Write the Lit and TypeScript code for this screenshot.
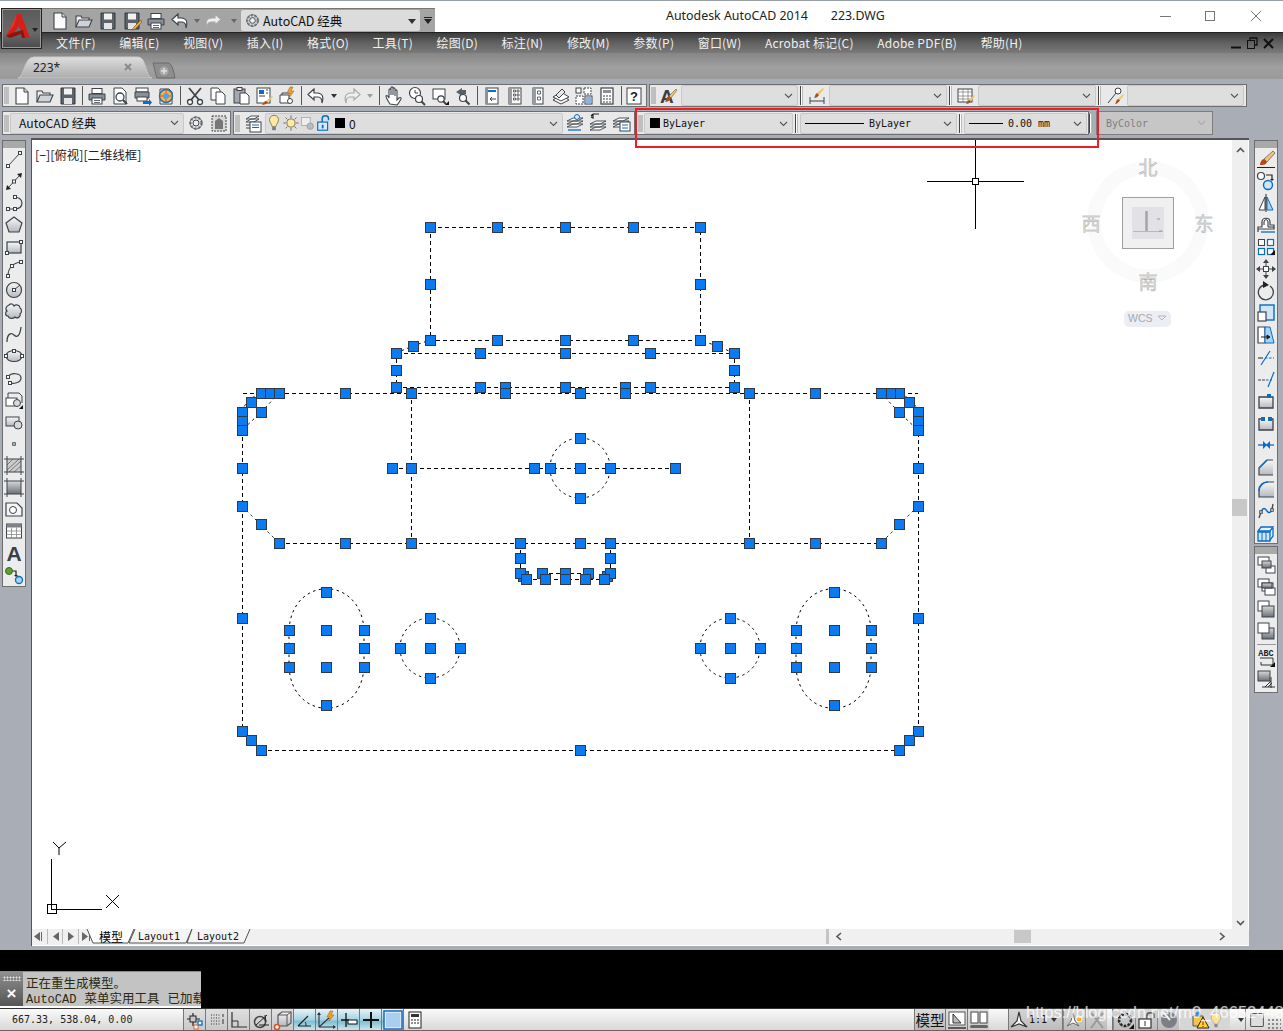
import { LitElement, html, css, svg } from "lit";
import { customElement } from "lit/decorators.js";
import { unsafeSVG } from "lit/directives/unsafe-svg.js";

const D = "#3d434b", B = "#0a6cc4", G = "#8a8f96";
const box = (x: number, y: number, s = 3, c = D) => `<rect x="${x - s / 2}" y="${y - s / 2}" width="${s}" height="${s}" fill="#fff" stroke="${c}"/>`;
const st = (d: string, c = D, w = 1.2) => `<path d="${d}" fill="none" stroke="${c}" stroke-width="${w}"/>`;
const grad = `<linearGradient id="gg" x1="0" y1="0" x2="0" y2="1"><stop offset="0" stop-color="#f8f8f8"/><stop offset="1" stop-color="#b4b8be"/></linearGradient><linearGradient id="gd" x1="0" y1="0" x2="0" y2="1"><stop offset="0" stop-color="#d8d8d8"/><stop offset="1" stop-color="#6a6f76"/></linearGradient>`;
const brush = `<path d="M17 3l1 1-6 8-2-2z" fill="#f1c56a" stroke="#7a5a20" stroke-width=".6"/><path d="M10 10l2 2c-1 3-4 4-6 4 1-1 1-5 4-6z" fill="#a8501c"/>`;
const page = `<path d="M4 2h8l4 4v12H4z" fill="#fbfbfb" stroke="${D}" stroke-width="1.1"/><path d="M12 2v4h4" fill="#e0e0e0" stroke="${D}"/>`;
const folder = `<path d="M2 16V5h5l1 2h7v2" fill="#eee" stroke="${D}" stroke-width="1.1"/><path d="M2 16l3-7h13l-3 7z" fill="#cfd3d8" stroke="${D}" stroke-width="1.1"/>`;
const floppy = `<path d="M3 2h14v16H3z" fill="#5d636b" stroke="#33383e"/><rect x="6" y="2.5" width="8" height="6" fill="#f2f2f2"/><rect x="6" y="12" width="8" height="6" fill="#e4e4e4"/>`;
const printer = `<rect x="5" y="2.5" width="10" height="5" fill="#fff" stroke="${D}"/><path d="M2 8h16v6H2z" fill="#8b9097" stroke="${D}"/><rect x="5" y="12" width="10" height="6" fill="#fff" stroke="${D}"/><path d="M7 14.5h6M7 16.5h6" stroke="${D}" stroke-width=".8"/>`;
const undo = (c = D, f = "#fff") => `<path d="M8 3L2 8.5 8 14v-3h4c3 0 4 2 4 6 2-5 1-10-5-10H8z" fill="${f}" stroke="${c}" stroke-width="1.2"/>`;
const redo = (c = "#a8a8a8", f = "#eee") => `<path d="M12 3l6 5.5L12 14v-3H8c-3 0-4 2-4 6-2-5-1-10 5-10h3z" fill="${f}" stroke="${c}" stroke-width="1.2"/>`;
const stack = (y = 0) => `<path d="M2 ${14 + y}l6-3h10l-6 3z M2 ${11 + y}l6-3h10l-6 3z M2 ${8 + y}l6-3h10l-6 3z" fill="#fff" stroke="${D}" stroke-width=".9"/>`;
const bulb = `<path d="M10 1.5c-3.5 0-5 2.5-5 5 0 3 2.5 4.5 3 7.5h4c.5-3 3-4.5 3-7.5 0-2.5-1.500-5-5-5z" fill="#ffe9a0" stroke="#7a7a50"/><rect x="8" y="14.500" width="4" height="3.500" fill="#6b7c8a"/>`;

const I: Record<string, string> = {
  new: page,
  open: folder,
  save: floppy,
  saveas: floppy + `<path d="M19 9l-7 7-2 3 3-1 7-7z" fill="#f0b040" stroke="#8a5a10" stroke-width=".7"/>`,
  print: printer,
  undo: undo(),
  redo: redo(),
  preview: `<path d="M4 2h8l4 4v12H4z" fill="#fff" stroke="${D}"/>` + `<circle cx="10" cy="11" r="4" fill="#fff" stroke="${D}" stroke-width="1.3"/><path d="M13 14l4 4" stroke="${D}" stroke-width="2"/>`,
  plot: `<rect x="3" y="2" width="12" height="4" fill="#fff" stroke="${D}"/><path d="M2 6h14v6H2z" fill="#8b9097" stroke="${D}"/><rect x="4" y="11" width="10" height="4" fill="#fff" stroke="${D}"/><path d="M10 15h6v-2l3 3.500-3 3.500v-2h-6z" fill="#1668c0"/>`,
  dwf: `<path d="M4 3h9l3 3v12H4z" fill="#fff" stroke="${D}"/><circle cx="10" cy="10" r="6.500" fill="#f7b53c" stroke="#2a6fb0" stroke-width="1.500"/><path d="M10 4v12M4 10h12" stroke="#e05030"/><circle cx="10" cy="10" r="3" fill="#5aa0de"/>`,
  cut: `<path d="M4 2l10 12M16 2L6 14" stroke="${D}" stroke-width="1.800"/><circle cx="5" cy="16" r="2.500" fill="#fff" stroke="${D}" stroke-width="1.300"/><circle cx="15" cy="16" r="2.500" fill="#fff" stroke="${D}" stroke-width="1.300"/>`,
  copyc: `<path d="M3 2h7l2 2v10H3z" fill="#fff" stroke="${D}"/><path d="M8 6h6l3 3v9H8z" fill="#fff" stroke="${D}"/>`,
  paste: `<rect x="3" y="3" width="11" height="14" fill="#a5a9af" stroke="${D}"/><rect x="6" y="1.500" width="5" height="3" fill="#eee" stroke="${D}"/><path d="M9 7h6l3 3v8H9z" fill="#fff" stroke="${D}"/>`,
  match: `<rect x="3" y="2" width="13" height="15" fill="#fff" stroke="${D}"/><rect x="5" y="4" width="5" height="4" fill="#1668c0"/><path d="M12 4h2M12 7h2M5 10h6" stroke="${D}"/>` + `<path d="M18 10l1 1-5 5-2-1z" fill="#f1c56a"/><path d="M12 15l2 1c-1 2-4 3-6 3 1-1 2-4 4-4z" fill="#a8501c"/>`,
  block: `<path d="M3 9h9v8H3z" fill="#fff" stroke="${D}"/><path d="M5 9V7h9" fill="none" stroke="${D}"/><circle cx="13" cy="15" r="2.500" fill="#fff" stroke="${D}"/><path d="M13 1l-3 6h3l-1 5 5-7h-3l2-4z" fill="#f0a030" stroke="#a05a10" stroke-width=".5"/>`,
  pan: `<path d="M6 18c-2-3-4-6-4-8 1-1 2 0 3 2V4c0-1.500 2-1.500 2 0v5-7c0-1.500 2-1.500 2 0v7-6c0-1.500 2-1.500 2 0v7-5c0-1.500 2-1.500 2 0v9l2-2c1.500-1 2.500 0 2 1l-3 5-1 1z" fill="#fff" stroke="${D}" stroke-width="1.100"/>`,
  zoomr: `<circle cx="8" cy="7" r="5.500" fill="#fff" stroke="${D}" stroke-width="1.200"/><path d="M8 4v3h3" fill="none" stroke="${D}"/><circle cx="12" cy="13" r="3.500" fill="#fff" stroke="${D}" stroke-width="1.200"/><path d="M14.500 15.500l3.500 3.500" stroke="${D}" stroke-width="2"/>`,
  zoomw: `<rect x="3" y="3" width="12" height="10" fill="#fff" stroke="${D}"/><circle cx="11" cy="13" r="3.200" fill="#fff" stroke="${D}" stroke-width="1.200"/><path d="M13 15l3 3" stroke="${D}" stroke-width="2"/><path d="M15 19h4v-4z" fill="#111"/>`,
  zoomp: `<path d="M9 2L3 6l6 4V8h4V4H9z" fill="#5a6068"/><circle cx="10" cy="12" r="3.500" fill="#fff" stroke="${D}" stroke-width="1.200"/><path d="M12.500 14.500l4 4" stroke="${D}" stroke-width="2"/>`,
  prop: `<rect x="4" y="2" width="12" height="16" fill="#fff" stroke="${D}"/><rect x="6" y="4" width="8" height="2" fill="#1668c0"/><rect x="4" y="2" width="2" height="16" fill="#8b9097"/><path d="M8 13h6M8 13l2-2M8 13l2 2" fill="none" stroke="${D}"/>`,
  design: `<rect x="4" y="2" width="12" height="16" fill="#fff" stroke="${D}"/><rect x="4" y="2" width="3" height="16" fill="#9a9ea4"/><path d="M8.500 4h2v2h-2zM12 4h2v2h-2zM8.500 8h2v2h-2zM12 8h2v2h-2zM8.500 12h2v2h-2zM12 12h2v2h-2z" fill="#fff" stroke="${D}" stroke-width=".8"/>`,
  palette: `<rect x="5" y="2" width="10" height="16" fill="#fff" stroke="${D}"/><rect x="5" y="2" width="3" height="16" fill="#9a9ea4"/><path d="M9.500 5h3v3h-3zM9.500 11h3v3h-3z" fill="#fff" stroke="${D}" stroke-width=".8"/>`,
  sheet: `<path d="M2 14l8-5 8 5-8 4z" fill="#fff" stroke="${D}"/><path d="M2 11l8-5 8 5-8 4z" fill="#fff" stroke="${D}"/><path d="M5 9l6-6 3 3-6 6z" fill="#e8e8e8" stroke="${D}"/>`,
  markup: `<rect x="2" y="2" width="5" height="5" fill="#fff" stroke="${D}"/><path d="M10 2h7v6h-7zM2 10h7v8H2z" fill="#fff" stroke="${D}" stroke-dasharray="2 1"/><rect x="11" y="10" width="7" height="8" fill="#fff" stroke="${D}"/><path d="M12 12h5M12 14h5M12 16h5" stroke="#1668c0"/>`,
  calc: `<rect x="4" y="2" width="12" height="16" fill="#fff" stroke="${D}" stroke-width="1.200"/><rect x="6" y="4" width="8" height="3" fill="#8b9097"/><path d="M6 10h2M9 10h2M12 10h2M6 13h2M9 13h2M12 13h2M6 16h2M9 16h2M12 16h2" stroke="${D}"/>`,
  help: `<rect x="3" y="2" width="14" height="16" fill="#fff" stroke="${D}"/><text x="10" y="15" text-anchor="middle" font-size="13" font-weight="700" font-family="Liberation Sans" fill="#222">?</text>`,
  textst: `<text x="1" y="17" font-size="19" font-weight="700" font-family="Liberation Sans" fill="#3a4048">A</text>` + brush,
  dimst: `<path d="M3 11v7M17 11v7M3 15h14" stroke="${D}" fill="none"/>` + `<path d="M16 2l1 1-5 6-2-2z" fill="#f1c56a"/><path d="M10 7l2 2c-1 2-3 3-5 3 1-1 1-4 3-5z" fill="#a8501c"/>`,
  tablest: `<rect x="2" y="3" width="14" height="13" fill="#fff" stroke="${D}"/><path d="M2 6h14M2 10h14M2 13h14M7 3v13M12 3v13" stroke="#777" stroke-width=".7"/>` + `<path d="M18 9l1 1-4 5-2-1z" fill="#f1c56a"/><path d="M13 14l2 1c-1 2-3 3-5 3 1-1 1-3 3-4z" fill="#a8501c"/>`,
  mleader: `<circle cx="13" cy="5" r="3" fill="#fff" stroke="${D}"/><path d="M11 7l-8 10" stroke="${D}"/><path d="M18 8l1 1-4 5-2-1z" fill="#f1c56a"/><path d="M13 13l2 1c-1 2-3 4-5 4 1-1 1-4 3-5z" fill="#a8501c"/>`,
  gear: `<circle cx="10" cy="10" r="5.500" fill="none" stroke="${G}" stroke-width="2.500" stroke-dasharray="2.400 1.500"/><circle cx="10" cy="10" r="6" fill="none" stroke="${D}" stroke-width=".7"/><circle cx="10" cy="10" r="3" fill="#eee" stroke="${D}"/>`,
  wsave: `<rect x="3" y="3" width="14" height="15" fill="#d8d8d8" stroke="${D}" stroke-dasharray="2 1"/><path d="M6 8l4-3 4 3v8H6z" fill="#777"/>`,
  layerm: `<path d="M3 9l5-3h8l-5 3zM3 6l5-3h8l-5 3z" fill="#fff" stroke="${D}" stroke-width=".9"/><rect x="7" y="9" width="11" height="10" fill="#fff" stroke="${D}"/><path d="M9 12h7M9 14.500h7" stroke="${B}"/><path d="M3 12l4 0M3 15l4 0" stroke="${D}"/>`,
  lamp: bulb,
  sun: `<circle cx="10" cy="10" r="4.500" fill="#ffe9a0" stroke="#7a7050"/><path d="M10 1.500v3M10 15.500v3M1.500 10h3M15.500 10h3M4 4l2 2M14 14l2 2M4 16l2-2M14 6l2-2" stroke="#6a6a50"/>`,
  vplock: `<rect x="3" y="3" width="11" height="10" fill="#eee" stroke="#a5a5a5"/><circle cx="14" cy="14" r="4" fill="#b8bcc0" stroke="#999"/>`,
  lock: `<rect x="3" y="9" width="11" height="9" fill="#d5edf8" stroke="#0a6cc4" stroke-width="1.300"/><path d="M8 9V5c0-4 7-4 7 0v2" fill="none" stroke="#0a6cc4" stroke-width="1.600"/><rect x="7.500" y="12" width="2" height="4" fill="#0a6cc4"/>`,
  layeru: stack() + `<circle cx="12" cy="4" r="2.500" fill="#dce8f4" stroke="${B}"/><path d="M3 17h13" stroke="${B}" stroke-width="1.300"/>`,
  layerp: stack(3) + `<path d="M5 1v4l-2-1m2 -3l-2 2 M5 1h6" fill="none" stroke="#222" stroke-width="1.200"/>`,
  layers: stack() + `<rect x="9" y="9" width="10" height="9" fill="#fff" stroke="${D}"/><path d="M11 12h6M11 15h6" stroke="${B}"/>`,
  line: `<path d="M4 17L16 4" stroke="${D}"/>` + box(4, 17) + box(16, 4),
  xline: `<path d="M3 18L17 3" stroke="${D}"/><path d="M2 19l1-5 4 4zM18 2l-1 5-4-4z" fill="#222"/>` + box(10, 10.5),
  pline: st("M4 16h6c5 0 8-2 8-6s-4-6-8-6") + box(4, 16) + box(11, 16) + box(11, 4),
  polygon: `<path d="M10 2l8 6-3 9H5L2 8z" fill="url(#gg)" stroke="${D}" stroke-width="1.200"/>`,
  rect: `<rect x="3" y="5" width="14" height="11" fill="url(#gg)" stroke="${D}" stroke-width="1.200"/>` + box(3, 16) + box(17, 5),
  arc: st("M4 18C4 10 9 5 17 4") + box(4, 18) + box(8, 8) + box(17, 4),
  circle: `<circle cx="10" cy="10" r="7.500" fill="url(#gg)" stroke="${D}" stroke-width="1.200"/><path d="M10 10l6-5" stroke="${D}"/>` + box(10, 10),
  cloud: `<path d="M5 3c2-2 4-1 5 1 2-2 6-1 6 2 2 1 2 5 0 6 1 3-3 5-5 3-2 2-6 2-7-1-3 0-3-4-1-5-2-2-1-5 2-6z" fill="url(#gg)" stroke="${D}" stroke-width="1.200"/>`,
  spline: st("M3 18C3 10 7 8 10 11s6 1 7-8", D, 1.300),
  ellipse: `<ellipse cx="10" cy="10" rx="8" ry="5.500" fill="url(#gg)" stroke="${D}" stroke-width="1.200"/>` + box(2, 10) + box(18, 10) + box(10, 5),
  earc: st("M4 9c3-5 13-4 13 1s-8 6-11 5") + box(4, 9) + box(6, 15),
  insert: `<path d="M4 8V3h11l3 3v7" fill="none" stroke="${D}"/><rect x="2" y="8" width="11" height="8" fill="#fff" stroke="${D}"/><circle cx="13" cy="13" r="3.500" fill="#d8d8d8" stroke="${D}"/><path d="M15 19h4v-4z" fill="#111"/>`,
  blockm: `<rect x="2" y="5" width="13" height="9" fill="url(#gg)" stroke="${D}"/><circle cx="14" cy="13" r="4" fill="#d8d8d8" stroke="${D}"/>`,
  point: box(10, 10, 2.500),
  hatch: `<rect x="3" y="4" width="14" height="13" fill="#ccc"/><path d="M3 15L15 4M5 17L17 6M3 10l6-6M10 17l7-6" stroke="#777" stroke-width="1"/><path d="M0 4h20M0 17h20M3 1v19M17 1v19" stroke="${D}"/>`,
  gradient: `<rect x="3" y="4" width="14" height="13" fill="url(#gd)"/><path d="M0 4h20M0 17h20M3 1v19M17 1v19" stroke="${D}"/>`,
  region: `<path d="M2 4h11l5 5v8H2z" fill="#f5f5f5" stroke="${D}" stroke-width="1.200"/><circle cx="9" cy="11" r="3.500" fill="#fff" stroke="${D}"/>`,
  table: `<rect x="2.500" y="3" width="15" height="14" fill="#fff" stroke="${D}"/><rect x="2.500" y="3" width="15" height="3.500" fill="#7d8389"/><path d="M2.500 10h15M2.500 13.500h15M7.500 6.500V17M12.500 6.500V17" stroke="#888" stroke-width=".8"/>`,
  mtext: `<text x="10" y="17.500" text-anchor="middle" font-size="21" font-weight="700" font-family="Liberation Sans" fill="#3a4048">A</text>`,
  addsel: `<circle cx="5" cy="6" r="3.500" fill="#5fa030" stroke="#3a6a20"/><circle cx="15" cy="15" r="3.500" fill="#a8d4f4" stroke="#0a6cc4" stroke-width="1.300"/><path d="M9 6h3v4" fill="none" stroke="#222" stroke-width="1.200"/><path d="M10 10h4l-2 2z" fill="#222"/>`,
  erase: `<path d="M17 2l2 2-8 9-3-3z" fill="#f2c27a" stroke="#555" stroke-width=".7"/><path d="M8 10l3 3c-1 3-4 3-7 3 0-3 2-6 4-6z" fill="#b8481c"/><path d="M1 18.500h18" stroke="#222"/>`,
  copy: `<circle cx="5" cy="5" r="3.500" fill="#fff" stroke="${D}" stroke-width="1.200"/><circle cx="12" cy="14" r="4.500" fill="#cfe6f8" stroke="${B}" stroke-width="1.400"/><path d="M10 4h6v4" fill="none" stroke="#222" stroke-width="1.200"/><path d="M14 8h4l-2 2z" fill="#222"/>`,
  mirror: `<path d="M9 4L3 17h6z" fill="#fff" stroke="${D}"/><path d="M11 4l6 13h-6z" fill="#a8d4f4" stroke="${B}"/><path d="M10 1v18" stroke="#222"/>`,
  offset: `<path d="M2 17V12h4V7c0-5 8-5 8 0v3h4v4H2" fill="#fff" stroke="${D}" stroke-width="1.200"/><path d="M5 17h14" stroke="${B}" stroke-width="1.300"/><path d="M8 10V7c0-3 4-3 4 0v5h6" fill="none" stroke="#222"/>`,
  array: `<rect x="2.500" y="2.500" width="6" height="6" fill="#fff" stroke="${D}"/><rect x="11.500" y="2.500" width="6" height="6" fill="#fff" stroke="${B}" stroke-width="1.200"/><rect x="2.500" y="11.500" width="6" height="6" fill="#fff" stroke="${B}" stroke-width="1.200"/><rect x="11.500" y="11.500" width="6" height="6" fill="#fff" stroke="${B}" stroke-width="1.200"/><path d="M14 18h5v-5z" fill="#111"/>`,
  move: `<path d="M10 2v16M2 10h16" stroke="${D}"/><path d="M10 0l3 4H7zM10 20l3-4H7zM0 10l4-3v6zM20 10l-4-3v6z" fill="${D}"/><rect x="7.500" y="7.500" width="5" height="5" fill="#fff" stroke="${D}"/>`,
  rotate: `<path d="M8 4a7.500 7.500 0 1 0 6 1" fill="none" stroke="${D}" stroke-width="1.300"/><path d="M7 0l6 4-6 3z" fill="#222"/>`,
  scale: `<rect x="4" y="2" width="14" height="15" fill="#cfe6f8" stroke="${B}" stroke-width="1.400"/><rect x="2" y="9" width="8" height="9" fill="#fff" stroke="${D}" stroke-width="1.200"/>`,
  stretch: `<path d="M2 2h7v16H2z" fill="#fff" stroke="${D}" stroke-width="1.200"/><path d="M9 2h5l4 16H9z" fill="#a8d4f4" stroke="${B}"/><path d="M5 12h6M14 12h-3m3 0l-3-2v4z" stroke="#222" fill="#222"/>`,
  trim: `<path d="M2 11h5" stroke="${D}" stroke-width="1.200"/><path d="M9 11h9" stroke="${B}" stroke-width="1.200" stroke-dasharray="2.500 1.500"/><path d="M14 4L5 18" stroke="${B}" stroke-width="1.200"/>`,
  extend: `<path d="M2 11h8" stroke="${D}" stroke-width="1.200" stroke-dasharray="3 1"/><path d="M10 11h6" stroke="${B}" stroke-width="1.200" stroke-dasharray="2.500 1.500"/><path d="M18 3L12 18" stroke="${B}" stroke-width="1.200"/>`,
  breakp: `<path d="M3 6h14v11H3z" fill="url(#gg)" stroke="${D}" stroke-width="1.300"/><rect x="11" y="3" width="4" height="4" fill="${B}"/>`,
  breakx: `<path d="M6 6H3v11h14V6h-3" fill="url(#gg)" stroke="${D}" stroke-width="1.300"/><path d="M6 6h8" stroke="#fff" stroke-width="1.500"/><rect x="5" y="4" width="4" height="4" fill="${B}"/><rect x="12" y="4" width="4" height="4" fill="${B}"/>`,
  join: `<path d="M2 10h16" stroke="${B}" stroke-width="1.300"/><path d="M7 6l4 4-4 4zM14 6l-4 4 4 4z" fill="${B}"/>`,
  chamfer: `<path d="M3 18V11l8-8h6v15z" fill="url(#gg)"/><path d="M17 3h-6l-8 8v7h14" fill="none" stroke="${D}" stroke-width="1.200"/><path d="M11 3l-8 8" stroke="${B}" stroke-width="1.500"/>`,
  fillet: `<path d="M3 18V11c0-5 4-8 9-8h6v15z" fill="url(#gg)"/><path d="M18 18H3v-7c0-5 4-8 9-8h6" fill="none" stroke="${D}" stroke-width="1.200"/><path d="M3 12c0-5 4-9 9-9" fill="none" stroke="${B}" stroke-width="1.500"/>`,
  blend: st("M3 17l2-6", D, 1.300) + st("M5 11c2-5 4-4 6-1s4 1 5-1", B, 1.400) + st("M16 8l1-5", D, 1.300) + box(5, 11, 2.500) + box(16, 9, 2.500),
  explode: `<path d="M2 9h12v9H2z" fill="#cfe6f8" stroke="${B}" stroke-width="1.300"/><path d="M5 4h12l-3 4H2zM17 5v8l-3 4" fill="#e8f2fa" stroke="${B}" stroke-width="1.300"/><path d="M6 9v9M10 9v9" stroke="${B}"/>`,
  front: `<rect x="2" y="2" width="11" height="8" fill="#fff" stroke="${D}"/><rect x="10" y="11" width="9" height="7" fill="#fff" stroke="${D}"/><rect x="6" y="6" width="9" height="7" fill="url(#gd)" stroke="${D}"/>`,
  back: `<rect x="2" y="2" width="11" height="8" fill="#fff" stroke="${D}"/><rect x="6" y="6" width="11" height="8" fill="#fff" stroke="${D}"/><rect x="9" y="11" width="10" height="7" fill="#fff" stroke="${D}"/><rect x="6" y="6" width="10" height="5" fill="url(#gd)" stroke="${D}"/>`,
  above: `<rect x="2" y="2" width="11" height="10" fill="#fff" stroke="${D}"/><rect x="6" y="7" width="12" height="11" fill="url(#gd)" stroke="${D}"/>`,
  below: `<rect x="6" y="7" width="12" height="11" fill="url(#gd)" stroke="${D}"/><rect x="2" y="2" width="11" height="10" fill="#fff" stroke="${D}"/>`,
  abc: `<text x="10" y="9" text-anchor="middle" font-size="8.500" font-weight="700" font-family="Liberation Mono" fill="#222">ABC</text><path d="M4 11h13v7H5v-3" fill="none" stroke="#333"/><path d="M14 20h5v-5z" fill="#111"/>`,
  hatche: `<rect x="2" y="2" width="12" height="10" fill="url(#gd)" stroke="${D}"/><path d="M6 18h13M15 8v11M9 18l6-6M12 18l4-4" stroke="#333"/>`,
  snap: `<path d="M8 3v13M2 9h13" stroke="#222" stroke-width="1.200"/><rect x="5" y="6" width="6" height="6" fill="#c8c8c8" stroke="#222"/><rect x="13" y="11" width="4" height="4" fill="#fff" stroke="${B}" stroke-width="1.300"/><rect x="9" y="15" width="4" height="4" fill="#fff" stroke="#e06030"/>`,
  grid: `<path d="M4 5h10M4 8h10M4 11h10M4 14h10" stroke="#333" stroke-dasharray="1 1.500"/><path d="M16 4v3M16 9v5" stroke="#333"/>`,
  ortho: `<path d="M3 2v15h15" fill="none" stroke="#333" stroke-width="1.200"/><path d="M3 11h6v6" fill="none" stroke="#333"/>`,
  polar: `<circle cx="9" cy="12" r="5.500" fill="none" stroke="#444" stroke-width="1.500"/><path d="M5 15L16 5M8 15h10M14 5l1 7" fill="none" stroke="#222"/>`,
  osnap3: `<path d="M5 5l4-3h9v11l-4 3H5z" fill="url(#gg)" stroke="#555" stroke-width="1.200"/><path d="M5 5h9v11M14 5l4-3" fill="none" stroke="#555"/><circle cx="4" cy="17" r="2.500" fill="#fff" stroke="#e05020" stroke-width="1.600"/>`,
  otrack: `<path d="M3 16L13 6M3 16h13" fill="none" stroke="#222" stroke-width="1.200"/><path d="M10 12c1 1 1 2 1 4" fill="none" stroke="#222"/>`,
  ducs: `<path d="M2 17V3M2 17h16M2 17l10-9" fill="none" stroke="#333" stroke-width="1.100"/><path d="M0 5l2-3 2 3zM16 15l3 2-3 2z" fill="#333"/><path d="M13 1l-3 6h3l-1 4 5-6h-3l2-4z" fill="#f5a020" stroke="#a05a10" stroke-width=".5"/>`,
  dyn: `<path d="M7 3v14M2 10h8" stroke="#111" stroke-width="1.300"/><rect x="9" y="10" width="9" height="4" fill="#fff" stroke="#111"/>`,
  plus: `<path d="M10 2v16M2 10h16" stroke="#111" stroke-width="2"/>`,
  tpy: `<rect x="1" y="1" width="18" height="18" fill="#fff" stroke="#1a66b8" stroke-width="1.500"/><rect x="2.500" y="2.500" width="15" height="15" fill="#a8cfee"/>`,
  sc: `<rect x="4" y="2" width="12" height="16" fill="#fff" stroke="#222"/><rect x="6" y="4" width="8" height="3" fill="#333"/><path d="M6 10h2M9 10h2M12 10h2M6 13h2M9 13h2M12 13h2" stroke="#222"/>`,
  stmodel: `<rect x="2" y="2" width="16" height="13" fill="#fff" stroke="#555"/><path d="M6 4v9h8z" fill="#bbb" stroke="#333"/><path d="M1 18h18" stroke="#333" stroke-width="1.500"/>`,
  stlayout: `<rect x="2" y="2" width="7" height="11" fill="#fff" stroke="#444"/><rect x="11" y="2" width="7" height="11" fill="#fff" stroke="#444"/><rect x="1" y="15" width="18" height="3" rx="1.500" fill="#666"/>`,
  anno: `<path d="M10 2l2 9 6 6-8-3-8 3 6-6z" fill="#fff" stroke="#333" stroke-width="1.200"/>`,
  anno2: `<path d="M8 3l2 8 4 5-6-3-6 3 4-5z" fill="#fff" stroke="#666"/><circle cx="14" cy="9" r="3" fill="#ffb020" stroke="#fff"/>`,
  anno3: `<path d="M4 3l6 7 6-7M10 10l-6 8M10 10l6 8" fill="none" stroke="#9a9a9a" stroke-width="2"/>`,
  sgear: `<circle cx="10" cy="10" r="6" fill="none" stroke="#222" stroke-width="2.600" stroke-dasharray="2.400 1.600"/><circle cx="10" cy="10" r="6.500" fill="none" stroke="#333" stroke-width=".7"/><path d="M14 19h5v-5z" fill="#111"/>`,
  slock: `<rect x="2" y="9" width="12" height="9" fill="#fff" stroke="#333" stroke-width="1.200"/><path d="M8 11v5" stroke="#333"/><path d="M10 9V5c0-3 7-3 7 0v3" fill="none" stroke="#555" stroke-width="1.500"/>`,
  ball: `<circle cx="10" cy="10" r="8" fill="#7c7f85"/><path d="M4 2l7 8" stroke="#eee" stroke-width="2"/>`,
  warn: `<path d="M3 6h10v10H3z" fill="#f6c344" stroke="#555"/><circle cx="8" cy="4" r="2.500" fill="#3a8ae0"/><path d="M13 7l6 11H7z" fill="#ffd920" stroke="#222"/><path d="M13 11v4M13 16v1" stroke="#c00"/>`,
  sbulb: `<path d="M10 1c-4 0-6 3-6 6 0 3 3 5 4 8h4c1-3 4-5 4-8 0-3-2-6-6-6z" fill="#ffdf90" stroke="#aaa"/><rect x="8" y="15" width="4" height="4" fill="#8a8a8a"/>`,
  swin: `<rect x="2" y="2" width="16" height="16" rx="1" fill="#dedede" stroke="#555" stroke-width="1.300"/>`,
};

const icon = (n: string, sz = 20) => html`<svg class="ic" width=${sz} height=${sz} viewBox="0 0 20 20">${unsafeSVG(I[n] || "")}</svg>`;
const btn = (n: string) => html`<span class="btn">${icon(n)}</span>`;
const arrow = (dim = false) => html`<span class=${dim ? "ar dim" : "ar"}></span>`;
const sep = html`<span class="sep"></span>`;
const vsep = html`<span class="vsep"></span>`;
const chev = html`<svg class="chev" width="9" height="6" viewBox="0 0 9 6"><path d="M1 1l3.500 3.500L8 1" fill="none" stroke="#555" stroke-width="1.100"/></svg>`;
const grip = html`<span class="grip"></span>`;

const LEFT = ["line", "xline", "pline", "polygon", "rect", "arc", "circle", "cloud", "spline", "ellipse", "earc", "insert", "blockm", "point", "hatch", "gradient", "region", "table", "mtext", "addsel"];
const RIGHT = ["erase", "copy", "mirror", "offset", "array", "move", "rotate", "scale", "stretch", "trim", "extend", "breakp", "breakx", "join", "chamfer", "fillet", "blend", "explode"];
const MENU = ["文件(F)", "编辑(E)", "视图(V)", "插入(I)", "格式(O)", "工具(T)", "绘图(D)", "标注(N)", "修改(M)", "参数(P)", "窗口(W)", "Acrobat 标记(C)", "Adobe PDF(B)", "帮助(H)"];

type P = [number, number];
const OUTER: P[] = [
  [261, 393], [270, 393], [279, 393], [345, 393], [411, 393],
  [251, 402], [261, 412], [242, 412], [242, 421], [242, 430], [242, 468], [242, 506], [261, 524], [279, 543], [345, 543], [411, 543],
  [242, 618], [242, 731], [251, 740], [261, 750],
  [326, 592], [289, 630], [326, 630], [364, 630], [289, 648], [364, 648], [289, 667], [326, 667], [364, 667], [326, 705],
  [430, 618], [400, 648], [430, 648], [460, 648], [430, 678],
];
const UPPER: P[] = [
  [396, 353], [396, 370], [396, 387], [413, 346], [480, 353], [480, 387], [430, 340], [497, 340], [430, 284], [430, 227], [497, 227],
];
const CENTER: P[] = [
  [565, 227], [565, 340], [565, 353], [565, 387], [580, 393], [580, 750], [505, 387], [505, 393], [625, 387], [625, 393],
  [392, 468], [411, 468], [534, 468], [550, 468], [580, 468], [610, 468], [675, 468], [580, 438], [580, 498],
  [520, 543], [580, 543], [610, 543], [520, 558], [610, 558],
  [523, 576], [607, 576], [520, 573], [542, 573], [565, 573], [588, 573], [610, 573], [526, 579], [545, 579], [565, 579], [585, 579], [604, 579],
];
const HANDLES: P[] = [
  ...OUTER, ...OUTER.map(([x, y]): P => [1160 - x, y]),
  ...UPPER, ...UPPER.map(([x, y]): P => [1130 - x, y]),
  ...CENTER,
];

const SOLID = "M430.500 227.500H700.500V340.500H430.500Z M396.500 353.500H734.500V387.500H396.500Z M242.500 393.500H917.500 M242.500 430V731 M261 750.500H899 M918.500 731V430 M279 543.500H881 M411.500 393V543 M749.500 393V543 M392 468.500H675 M520.500 543V573 M610.500 543V573 M526 579.500H604 M542 573.500H588";
const ARCS = "M396 353L413 346L430 340 M734 353L717 346L700 340 M242 412Q245 400 261 393 M918 412Q915 400 899 393 M279 393Q262 412 242 430 M881 393Q898 412 918 430 M242 506Q262 526 279 543 M918 506Q898 526 881 543 M520 573L526 579 M610 573L604 579 M550 468A30 30 0 1 1 610 468A30 30 0 1 1 550 468 M400 648A30 30 0 1 1 460 648A30 30 0 1 1 400 648 M700 648A30 30 0 1 1 760 648A30 30 0 1 1 700 648 M289 630C292 575 361 575 364 630V667C361 722 292 722 289 667Z M796 630C799 575 868 575 871 630V667C868 722 799 722 796 667Z";

@customElement("app-root")
export class AppRoot extends LitElement {
  static styles = css`
    :host { display: block; width: 1283px; height: 1031px; overflow: hidden; }
    * { box-sizing: border-box; }
    .app { position: relative; width: 1283px; height: 1031px; background: #a9adb5; display: flex; flex-direction: column; font-family: "Noto Sans CJK SC", "Liberation Sans", sans-serif; font-size: 12px; color: #111; }
    .ic { display: block; flex: none; overflow: visible; }
    .defs { position: absolute; }
    .title { height: 32px; flex: none; background: #fff; border-top: 1px solid #9aa0a8; display: flex; position: relative; }
    .logo { position: absolute; left: 1px; top: 7px; width: 41px; height: 41px; background: linear-gradient(#5a5a5a, #6a6a6a 60%, #4a4a4a); border: 1px solid #222; z-index: 2; box-shadow: inset 0 0 0 1px #999; }
    .qat { margin: 7px 0 0 41px; width: 394px; height: 24px; background: #a4a4a4; display: flex; align-items: center; padding-left: 7px; border-top: 1px solid #777; }
    .qb { width: 24px; display: flex; justify-content: center; }
    .ar { flex: none; width: 0; height: 0; border: 3px solid transparent; border-top: 4px solid #333; border-bottom: 0; margin: 0 3.500px; }
    .ar.dim { border-top-color: #9c9c9c; }
    .qat .ar { border-top-color: #666; margin: 0 1px 0 2px; }
    .qat .ar.a2 { margin: 0 3px 0 6px; }
    .wscombo { width: 179px; height: 21px; background: #dcdcdc; border-radius: 2px; display: flex; align-items: center; margin-left: 1px; padding-left: 2px; gap: 1px; position: relative; font-size: 12.500px; }
    .wscombo .tri { position: absolute; right: 4px; top: 9px; width: 0; height: 0; border: 4px solid transparent; border-top: 5px solid #333; border-bottom: 0; }
    .drop { width: 10px; margin-left: 3px; display: flex; flex-direction: column; align-items: center; gap: 1px; }
    .drop i { display: block; width: 8px; height: 1px; background: #222; }
    .drop b { display: block; width: 0; height: 0; border: 4px solid transparent; border-top: 5px solid #222; border-bottom: 0; }
    .apptitle { position: absolute; left: 666px; top: 6px; font-size: 12.400px; display: flex; gap: 23px; font-family: "Noto Sans", "Liberation Sans", sans-serif; line-height: 18px; color: #222; }
    .win { position: absolute; left: 1160px; top: 9px; display: flex; }
    .menu { height: 21px; flex: none; background: linear-gradient(#3c3c3c, #5e5e5e 45%, #7a7a7a); display: flex; align-items: center; gap: 23.500px; letter-spacing: .22px; padding-left: 56px; color: #f0f0f0; font-size: 12px; border-top: 1px solid #222; position: relative; line-height: 16px; }
    .mdi { position: absolute; left: 1231px; top: 4px; }
    .tabs { height: 26px; flex: none; background: linear-gradient(#868686, #a0a0a0 55%, #9a9a9a); display: flex; padding-left: 18px; align-items: flex-end; }
    .row { display: flex; flex: none; }
    .r1 { height: 23px; margin-top: 5px; padding-left: 2px; }
    .r2 { height: 24px; margin-top: 4px; padding-left: 2px; }
    .tb { height: 100%; background: #e9e9e9; border: 1px solid #6e6e6e; display: flex; align-items: center; }
    .grip { flex: none; width: 5px; height: 17px; margin: 0 1px 0 1px; background-image: radial-gradient(#666 40%, transparent 45%); background-size: 2px 2px; background-color: #bfbfbf; }
    .btn { flex: none; width: 23px; display: flex; justify-content: center; }
    .sep { flex: none; width: 1px; height: 19px; background: #555; margin: 0 2.500px; }
    .hbtn { margin-left: -2px; }
    .vsep { flex: none; width: 3px; height: 19px; border-left: 1px solid #444; border-right: 1px solid #bbb; margin: 0 2px; background: #fff; }
    .combo { flex: none; height: 21px; background: #dedede; border: 1px solid #c8c8c8; border-radius: 2px; display: flex; align-items: center; justify-content: space-between; padding: 0 4px 0 3px; }
    .chev { flex: none; }
    .t1a { width: 645px; margin-right: 2px; }
    .t1b { width: 598px; }
    .t2a { width: 229px; margin-right: 2px; }
    .t2b { width: 402px; margin-right: 1px; }
    .t2c { width: 453px; margin-right: 7px; }
    .c117 { width: 117px; margin-left: 1px; }
    .c118 { width: 118px; margin-left: 1px; }
    .wc { width: 174px; font-size: 12.200px; padding-left: 8px; }
    .lc { width: 298px; margin-left: 1px; justify-content: flex-start; padding-left: 0; position: relative; }
    .li { width: 16.500px; display: flex; justify-content: center; }
    .sq { display: block; width: 10px; height: 10px; background: #000; margin: 0 4px 0 3px; flex: none; }
    .mono { font-family: "DejaVu Sans Mono", monospace; font-size: 10px; }
    .cc1 { width: 149px; justify-content: flex-start; padding-left: 5px; position: relative; }
    .cc1 .sq { margin: 0 3px 0 0; }
    .cc2 { width: 157px; justify-content: flex-start; padding-left: 4px; position: relative; }
    .cc3 { width: 123px; justify-content: flex-start; padding-left: 4px; position: relative; }
    .combo .abs { position: absolute; right: 4px; top: 7px; display: flex; }
    .ln { display: block; height: 1px; background: #000; flex: none; }
    .l60 { width: 59px; margin-right: 5px; }
    .l34 { width: 34px; margin-right: 5px; }
    .bycolor { width: 117px; height: 100%; background: #c6c6c6; border: 1px solid #7c7c7c; display: flex; align-items: center; justify-content: space-between; padding: 0 6px 0 9px; color: #808080; }
    .bycolor .chev path { stroke: #aaa; }
    .main { flex: 1; display: flex; margin-top: 3px; min-height: 0; position: relative; }
    .vt { flex: none; width: 24px; background: #ececec; border: 1px solid #6e6e6e; display: flex; flex-direction: column; align-items: center; }
    .vgrip { align-self: stretch; flex: none; height: 7px; background-color: #a9a9a9; background-image: radial-gradient(#eee 35%, transparent 40%); background-size: 2px 2px; background-position: 3px 0; }
    .vb { flex: none; height: 21.900px; display: flex; align-items: center; }
    .vr { height: 22px; }
    .lt { margin: 2px 0 0 2px; height: 447px; }
    .view { margin-left: 5px; width: 1218px; height: 812px; flex: none; display: flex; flex-direction: column; border-top: 2px solid #555; border-left: 1px solid #555; background: #fff; position: relative; }
    .upper { flex: 1; display: flex; min-height: 0; }
    .canvas { width: 1200px; height: 100%; position: relative; background: #fff; overflow: hidden; }
    .canvas svg.dr { position: absolute; left: 0; top: 0; }
    .vplabel { position: absolute; left: 3px; top: 6px; font-size: 12.400px; line-height: 18px; color: #222; }
    .vs { flex: 1; background: #efefef; position: relative; border-right: 1px solid #fff; }
    .vthumb { position: absolute; left: 0; top: 359px; width: 15px; height: 17px; background: #c8c8c8; }
    .vs svg { position: absolute; left: 4px; }
    .vs .up { top: 7px; }
    .vs .down { bottom: 3px; }
    .hs { height: 17px; flex: none; display: flex; background: #f0f0f0; border-bottom: 1px solid #fff; position: relative; }
    .hs .thumb { position: absolute; left: 982px; top: 1px; width: 17px; height: 13px; background: #c8c8c8; }
    .hs .split { position: absolute; left: 794px; top: 0; width: 3px; height: 15px; background: #c4c4c4; }
    .hs svg.h { position: absolute; top: 3px; }
    .hs .hl { left: 803px; }
    .hs .hrt { left: 1186px; }
    .bottom-gap { height: 4px; flex: none; background: #a9adb5; margin-left: -1px; }
    .rt { margin: 2px 0 0 5px; height: 404px; }
    .rcol { display: flex; flex-direction: column; gap: 1px; flex: none; }
    .rt2 { height: 147px; margin-left: 5px; margin-top: 1px; }
    .hr { width: 19px; height: 1px; background: #999; margin: 2px 0 1px; flex: none; }
    .black { height: 58px; flex: none; background: #000; position: relative; }
    .bubble { position: absolute; left: 0; bottom: 0; width: 201px; height: 37px; background: #c3c3c3; display: flex; overflow: hidden; border-top: 1px solid #8a8a8a; border-bottom: 2px solid #fff; }
    .bx { width: 23px; flex: none; background: linear-gradient(#8f8f8f, #555); display: flex; flex-direction: column; align-items: center; color: #fff; font: 700 17px "Liberation Sans", sans-serif; }
    .bx i { display: block; width: 18px; height: 5px; margin: 4px 0 3px; background-image: radial-gradient(#ddd 45%, transparent 50%); background-size: 3px 3px; }
    .bt { padding: 3px 0 0 3px; line-height: 15px; font-size: 12.500px; white-space: nowrap; color: #2a2a10; }
    .bt .m { font-family: "Liberation Mono", monospace; font-size: 12px; }
    .bt .w { margin-left: 8px; }
    .status { height: 23px; flex: none; background: linear-gradient(#fafafa, #d8d8d8); display: flex; align-items: stretch; position: relative; border-top: 1px solid #333; border-bottom: 1px solid #666; }
    .coord { width: 183px; flex: none; padding: 2px 0 0 12px; font: 10px/18px "DejaVu Sans Mono", monospace; color: #222; }
    .sb { flex: none; width: 22px; display: flex; align-items: center; justify-content: center; border-left: 1px solid #777; background: linear-gradient(#dfdfdf, #c9c9c9); }
    .sb.on { background: linear-gradient(#e6f3f8, #a8d3e2 50%, #80bfd4 60%, #cbe5ee); }
    .sb.w31 { width: 31px; font-size: 14.500px; background: linear-gradient(#dcdcdc, #b8b8b8); color: #111; }
    .sb.lite { background: transparent; }
    .spacer { flex: none; width: 489px; }
    .sp2 { flex: none; width: 19px; }
    .sgroup { flex: none; display: flex; align-items: center; background: linear-gradient(#d4d4d4, #bcbcbc); height: 100%; border-left: 1px solid #777; }
    .s54 { width: 54px; font: 10px "DejaVu Sans Mono", monospace; color: #111; }
    .s54 .ar { margin: 0 0 0 4px; }
    .s54 .txt { margin-left: 0; }
    .sg2 { margin-left: 5px; }
    .si { flex: none; width: 22px; height: 100%; display: flex; align-items: center; justify-content: center; border-left: 1px solid #888; }
    .s48 { flex: none; width: 50px; display: flex; align-items: center; padding-left: 10px; background: #d6d6d6; margin-left: 1px; }
    .s48 .b2 { margin-left: -2px; }
    .status > .ar { align-self: center; margin: 0 1px 0 8px; }
    .sgrip { flex: none; width: 14px; align-self: flex-end; height: 12px; background-image: radial-gradient(#888 40%, transparent 45%); background-size: 4px 4px; }
    .wm { position: absolute; left: 1026px; top: 999px; font: 16.500px/26px "Liberation Sans", sans-serif; color: rgba(255, 255, 255, .62); white-space: nowrap; pointer-events: none; text-shadow: 0 0 1px rgba(255, 255, 255, .4); }
    .red { position: absolute; left: 635px; top: 108px; width: 464px; height: 40px; border: 2px solid #ee1c25; pointer-events: none; }
  `;

  logo() {
    return html`<div class="logo"><svg width="39" height="39" viewBox="0 0 39 39">
      <path d="M15 5H19L28 29H22L17 17L12 24L4 27Z" fill="#d5201a"/>
      <path d="M10 24L21 21L23 29H20L19 25L8 29L4 27Z" fill="#8a1410"/>
      <path d="M15 5L12 16L6 24Z" fill="#ec3a28"/>
      <path d="M30 19H36L33 23Z" fill="#222"/>
    </svg></div>`;
  }

  drawing() {
    return svg`
      <path d=${SOLID} fill="none" stroke="#000" stroke-dasharray="4 3" shape-rendering="crispEdges"/>
      <path d=${ARCS} fill="none" stroke="#000" stroke-dasharray="2.500 3.500" stroke-width="1"/>
      ${HANDLES.map(([x, y]) => svg`<rect x=${x - 4.5} y=${y - 4.5} width="10" height="10" fill="#0a7bf2" stroke="#2f3a44" shape-rendering="crispEdges"/>`)}
      <path d="M975.500 140V229M927 181.500H1024" stroke="#000" shape-rendering="crispEdges"/>
      <rect x="972.500" y="178.500" width="6" height="6" fill="#fff" stroke="#000" shape-rendering="crispEdges"/>
      <path d="M51.500 859V909.500H102" fill="none" stroke="#000" shape-rendering="crispEdges"/>
      <rect x="47.500" y="904.500" width="9" height="9" fill="none" stroke="#000" shape-rendering="crispEdges"/>
      <path d="M106 895L119 908M119 895L106 908M53 842L59 848L66 842M59 848V855" fill="none" stroke="#000"/>
      <circle cx="1148" cy="222" r="54" fill="none" stroke="#fafafa" stroke-width="13.500"/>
      <rect x="1122.500" y="197.500" width="51" height="51" fill="#f0f0f0" stroke="#a0a0a0"/>
      <rect x="1132" y="207" width="32" height="32" fill="#e2e2e6"/>
      <path d="M1146.500 211V232" stroke="#a4a4a8" stroke-width="2.500"/><path d="M1133 231.500H1163" stroke="#b8b8b8"/><path d="M1157 219H1160M1159 231H1162" stroke="#999"/>
      <g font-family="Noto Sans CJK SC" font-size="19" fill="#dcdcdc" stroke="#a8a8a8" stroke-width=".4" text-anchor="middle">
        <text x="1148" y="175">北</text><text x="1148" y="289">南</text><text x="1091" y="231">西</text><text x="1204" y="231">东</text>
      </g>
      <rect x="1124" y="311" width="47" height="16" rx="5" fill="#ecedf5"/>
      <text x="1128" y="322" font-family="Liberation Sans" font-size="10.500" fill="#a8a8ac">WCS</text>
      <path d="M1158 316H1166L1162 320Z" fill="none" stroke="#b5b5ba"/>
    `;
  }

  layoutTabs() {
    return html`<svg width="250" height="17" viewBox="0 0 250 17" class="ic">
      <path d="M15.500 0V15M30.500 0V15M46.500 0V15" stroke="#bbb"/>
      <g fill="#666">
        <path d="M8 3L2 7.500L8 12Z M27 3L21 7.500L27 12Z M36 3L42 7.500L36 12Z M50 3L56 7.500L50 12Z"/>
      </g>
      <path d="M9.500 3V12M57.500 3V12" stroke="#666"/>
      <path d="M55 0L61 14H96L102 0" fill="#fff" stroke="#555"/>
      <text x="67" y="13" font-family="Noto Sans CJK SC" font-size="12" fill="#000">模型</text>
      <path d="M103 0L97 14H154L160 0" fill="#f4f4f4" stroke="#555"/>
      <text x="106" y="11" font-family="DejaVu Sans Mono" font-size="10" fill="#111">Layout1</text>
      <path d="M160 0L155 14H212L218 0" fill="#f4f4f4" stroke="#555"/>
      <text x="165" y="11" font-family="DejaVu Sans Mono" font-size="10" fill="#111">Layout2</text>
    </svg>`;
  }

  render() {
    return html`<div class="app">
      <svg class="defs" width="0" height="0"><defs>${unsafeSVG(grad)}</defs></svg>
      <div class="title">
        ${this.logo()}
        <div class="qat">
          ${["new", "open", "save", "saveas", "print", "undo"].map((n) => html`<span class="qb">${icon(n)}</span>`)}
          ${arrow()}<span class="qb">${icon("redo")}</span><span class="ar a2"></span>
          <div class="wscombo">${icon("gear", 19)}<span>AutoCAD 经典</span><span class="tri"></span></div>
          <div class="drop"><i></i><b></b></div>
        </div>
        <div class="apptitle"><span>Autodesk AutoCAD 2014</span><span>223.DWG</span></div>
        <svg class="win" width="103" height="12" viewBox="0 0 103 12">
          <path d="M0 6.500H11" stroke="#777"/><rect x="45.500" y="1.500" width="9" height="9" fill="none" stroke="#777"/><path d="M91 1L101 11M101 1L91 11" stroke="#777"/>
        </svg>
      </div>
      <div class="menu">
        ${MENU.map((m) => html`<span>${m}</span>`)}
        <svg class="mdi" width="44" height="13" viewBox="0 0 44 13">
          <path d="M0 10.500H10" stroke="#111" stroke-width="2"/>
          <rect x="16.500" y="3.500" width="7" height="8" fill="none" stroke="#111"/><path d="M19 3V1H26V8H24" fill="none" stroke="#111" stroke-width="1.300"/>
          <path d="M33 2L42 11M42 2L33 11" stroke="#111" stroke-width="2"/>
        </svg>
      </div>
      <div class="tabs">
        <svg width="134" height="23" viewBox="0 0 134 23" class="ic">
          <defs><linearGradient id="tg" x1="0" y1="0" x2="0" y2="1"><stop offset="0" stop-color="#dedede"/><stop offset="1" stop-color="#acacac"/></linearGradient></defs>
          <path d="M0 22C6 22 6 1 16 1H120C129 1 127 22 134 22Z" fill="url(#tg)" stroke="#c8c8c8"/>
          <text x="15" y="16" font-family="Noto Sans" font-size="12" fill="#222">223*</text>
          <path d="M107 8L113 14M113 8L107 14" stroke="#8a8a8a" stroke-width="2"/>
        </svg>
        <svg width="24" height="19" viewBox="0 0 24 19" class="ic">
          <path d="M1 3H16C20 3 22 12 23 18H5C3 12 2 6 1 3Z" fill="#8d8d8d" stroke="#6a6a6a"/>
          <circle cx="12" cy="11" r="4.500" fill="#a8a8a8"/><path d="M12 8V14M9 11H15" stroke="#e0e0e0" stroke-width="1.500"/>
        </svg>
      </div>
      <div class="row r1">
        <div class="tb t1a">
          ${grip}
          ${["new", "open", "save"].map(btn)}${sep}
          ${["print", "preview", "plot", "dwf"].map(btn)}${sep}
          ${["cut", "copyc", "paste", "match", "block"].map(btn)}${sep}
          ${btn("undo")}${arrow()}${btn("redo")}${arrow(true)}${sep}
          ${["pan", "zoomr", "zoomw", "zoomp"].map(btn)}${sep}
          ${["prop", "design", "palette", "sheet", "markup", "calc"].map(btn)}${sep}
          <span class="btn hbtn">${icon("help")}</span>
        </div>
        <div class="tb t1b">
          ${grip}${btn("textst")}<div class="combo c117"><span></span>${chev}</div>${vsep}
          ${btn("dimst")}<div class="combo c118"><span></span>${chev}</div>${vsep}
          ${btn("tablest")}<div class="combo c118"><span></span>${chev}</div>${vsep}
          ${btn("mleader")}<div class="combo c117"><span></span>${chev}</div>
        </div>
      </div>
      <div class="row r2">
        <div class="tb t2a">${grip}<div class="combo wc"><span>AutoCAD 经典</span>${chev}</div>${btn("gear")}${btn("wsave")}</div>
        <div class="tb t2b">${grip}${btn("layerm")}
          <div class="combo lc">
            <span class="li">${icon("lamp", 18)}</span><span class="li">${icon("sun", 18)}</span><span class="li">${icon("vplock", 16)}</span><span class="li">${icon("lock", 18)}</span>
            <span class="sq"></span><span>0</span><span class="abs">${chev}</span>
          </div>
          ${["layeru", "layerp", "layers"].map(btn)}
        </div>
        <div class="tb t2c">${grip}
          <div class="combo cc1 mono"><span class="sq"></span><span>ByLayer</span><span class="abs">${chev}</span></div>${vsep}
          <div class="combo cc2 mono"><span class="ln l60"></span><span>ByLayer</span><span class="abs">${chev}</span></div>${vsep}
          <div class="combo cc3 mono"><span class="ln l34"></span><span>0.00 mm</span><span class="abs">${chev}</span></div>${vsep}
        </div>
        <div class="bycolor mono"><span>ByColor</span>${chev}</div>
      </div>
      <div class="main">
        <div class="vt lt"><span class="vgrip"></span>${LEFT.map((n) => html`<span class="vb">${icon(n)}</span>`)}</div>
        <div class="view">
          <div class="upper">
            <div class="canvas">
              <svg class="dr" width="1200" height="789" viewBox="32 140 1200 789">${this.drawing()}</svg>
              <div class="vplabel">[−][俯视][二维线框]</div>
            </div>
            <div class="vs">
              <svg class="up" width="9" height="6" viewBox="0 0 9 6"><path d="M1 5l3.500-3.500L8 5" fill="none" stroke="#555" stroke-width="1.600"/></svg>
              <div class="vthumb"></div>
              <svg class="down" width="9" height="6" viewBox="0 0 9 6"><path d="M1 1l3.500 3.500L8 1" fill="none" stroke="#555" stroke-width="1.600"/></svg>
            </div>
          </div>
          <div class="hs">
            ${this.layoutTabs()}
            <div class="split"></div>
            <svg class="h hl" width="9" height="9" viewBox="0 0 9 9"><path d="M6 1L2 4.500L6 8" fill="none" stroke="#555" stroke-width="1.600"/></svg>
            <div class="thumb"></div>
            <svg class="h hrt" width="9" height="9" viewBox="0 0 9 9"><path d="M2 1L6 4.500L2 8" fill="none" stroke="#555" stroke-width="1.600"/></svg>
          </div>
          <div class="bottom-gap"></div>
        </div>
        <div class="rcol">
          <div class="vt rt"><span class="vgrip"></span>${RIGHT.map((n) => html`<span class="vb vr">${icon(n)}</span>`)}</div>
          <div class="vt rt2"><span class="vgrip"></span>
            ${["front", "back", "above", "below"].map((n) => html`<span class="vb vr">${icon(n)}</span>`)}
            <span class="hr"></span>
            ${["abc", "hatche"].map((n) => html`<span class="vb vr">${icon(n)}</span>`)}
          </div>
        </div>
      </div>
      <div class="black">
        <div class="bubble">
          <div class="bx"><i></i><span>×</span></div>
          <div class="bt">正在重生成模型。<br /><span class="m">AutoCAD</span><span class="w">菜单实用工具</span><span class="w">已加载</span></div>
        </div>
      </div>
      <div class="status">
        <div class="coord">667.33, 538.04, 0.00</div>
        ${["snap", "grid", "ortho", "polar", "osnap3"].map((n) => html`<span class="sb">${icon(n)}</span>`)}
        ${["otrack", "ducs", "dyn", "plus", "tpy"].map((n) => html`<span class="sb on">${icon(n)}</span>`)}
        <span class="sb lite">${icon("sc")}</span>
        <span class="spacer"></span>
        <span class="sb w31">模型</span><span class="sb">${icon("stmodel")}</span><span class="sb">${icon("stlayout")}</span>
        <span class="sp2"></span>
        <div class="sgroup s54">${icon("anno")}<span class="txt">1:1</span><span class="ar"></span></div>
        <div class="sgroup"><span class="si">${icon("anno2")}</span><span class="si">${icon("anno3")}</span></div>
        <div class="sgroup sg2"><span class="si">${icon("sgear")}</span><span class="si">${icon("slock")}</span><span class="si">${icon("ball")}</span></div>
        <div class="s48">${icon("warn")}<span class="b2">${icon("sbulb", 16)}</span></div>
        <span class="ar"></span>
        <span class="si">${icon("swin", 16)}</span>
        <span class="sgrip"></span>
      </div>
      <div class="wm">https://blog.csdn.net/m0_46652448</div>
      <div class="red"></div>
    </div>`;
  }
}
